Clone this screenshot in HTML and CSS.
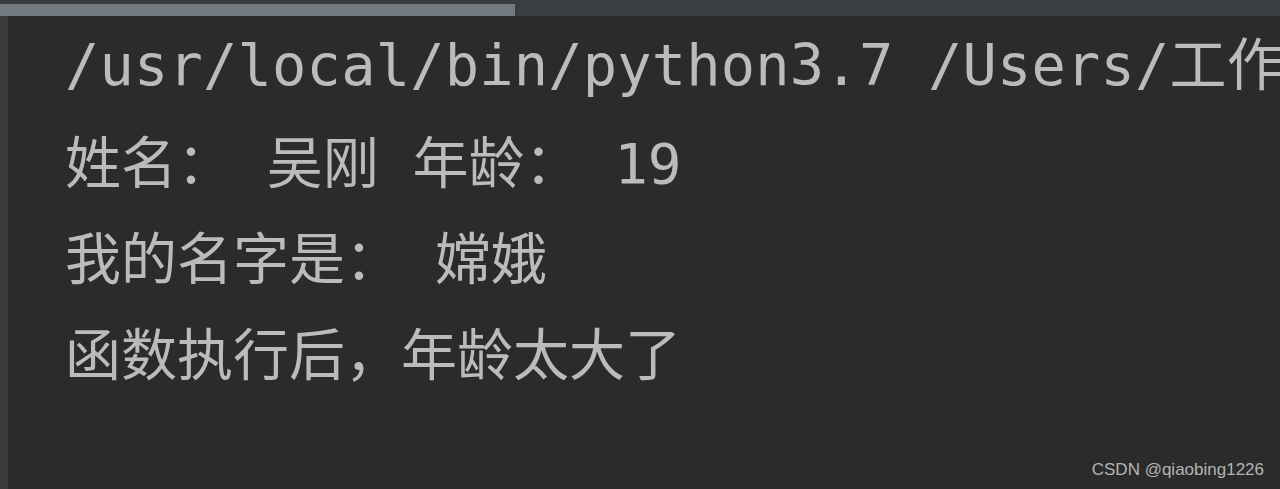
FILE: index.html
```html
<!DOCTYPE html>
<html lang="zh-CN">
  <head>
    <meta charset="UTF-8" />
    <meta name="viewport" content="width=device-width, initial-scale=1.0" />
    <title>运行输出</title>
    <link rel="stylesheet" href="styles.css">
  </head>
  <body>
    <div class="hscroll">
      <div class="hscroll-thumb"></div>
    </div>

    <div class="console">
      <div class="gutter"></div>
      <div class="output">
        <div class="line cmd">/usr/local/bin/python3.7 /Users/工作</div>
        <div class="line">姓名： 吴刚 年龄： 19</div>
        <div class="line">我的名字是： 嫦娥</div>
        <div class="line">函数执行后，年龄太大了</div>
      </div>
    </div>

    <div class="watermark">CSDN @qiaobing1226</div>
  </body>
</html>
```

FILE: styles.css
```css
* {
  margin: 0;
  padding: 0;
  box-sizing: border-box;
}

html,
body {
  height: 100%;
}

body {
  background: #2b2b2b;
  overflow: hidden;
  display: flex;
  flex-direction: column;
  position: relative;
}

.hscroll {
  height: 16px;
  background: #3b3e41;
  padding-top: 4px;
  flex-shrink: 0;
}

.hscroll-thumb {
  width: 515px;
  height: 12px;
  background: #747a82;
}

.console {
  flex: 1;
  display: flex;
  min-height: 0;
}

.gutter {
  width: 8px;
  background: #393c3f;
}

.output {
  flex: 1;
  padding: 4px 0 0 57px;
  font-family: "DejaVu Sans Mono", "Noto Sans CJK SC", monospace;
  font-size: 56px;
  line-height: 96px;
  color: #bbbbbb;
  overflow: hidden;
}

.line {
  white-space: pre;
}

.cmd {
  font-size: 57px;
  letter-spacing: 0.2px;
  margin-top: -3px;
  margin-bottom: 3px;
}

.watermark {
  position: absolute;
  right: 16px;
  bottom: 9px;
  font-family: "Liberation Sans", Arial, sans-serif;
  font-size: 17px;
  color: #b4b4b4;
}
```
